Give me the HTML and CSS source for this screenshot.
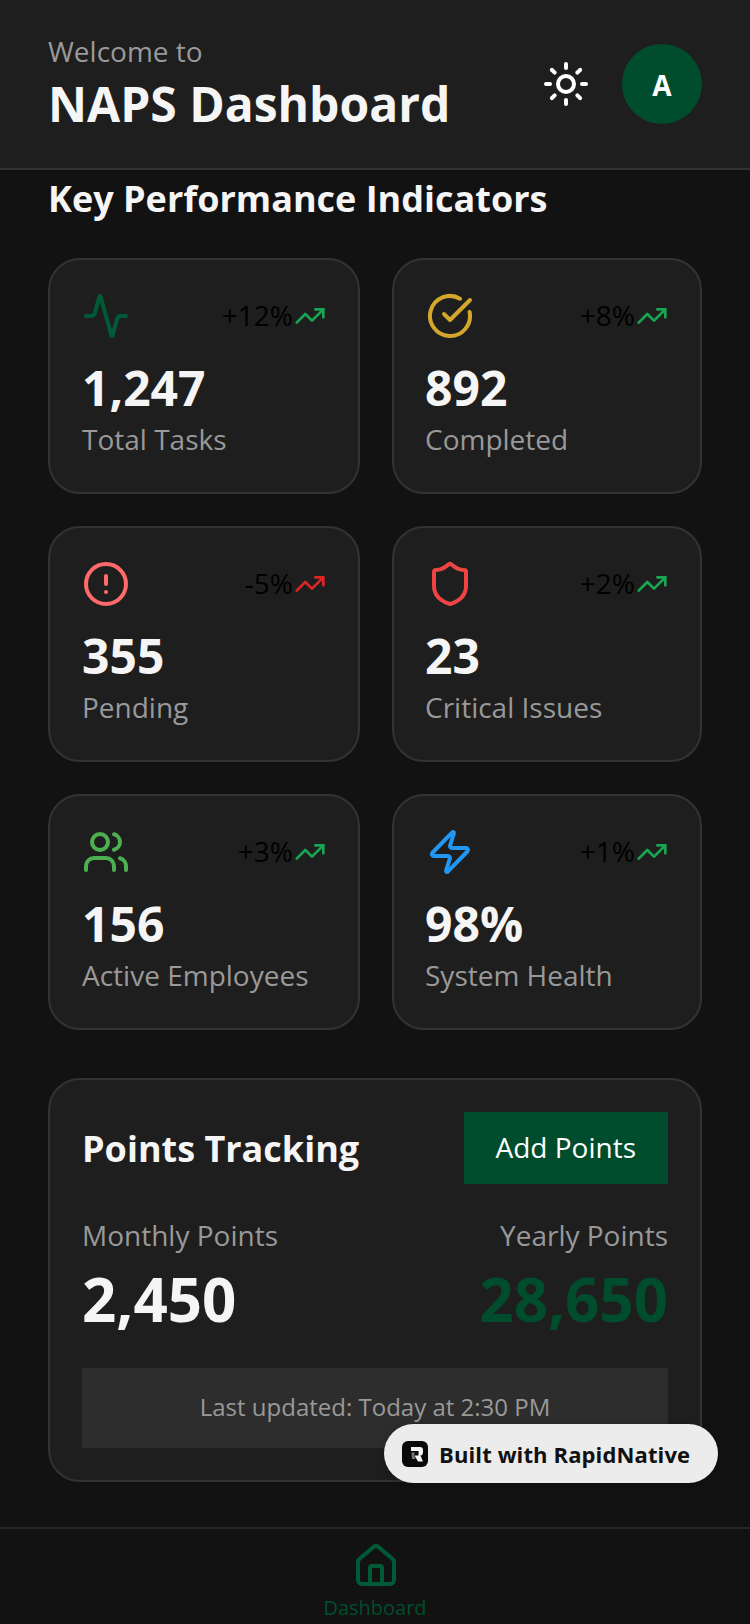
FILE: index.html
```html
<!DOCTYPE html>
<html lang="en">
<head>
<meta charset="utf-8">
<title>NAPS Dashboard</title>
<link rel="stylesheet" href="styles.css">
</head>
<body>
<div class="app">
  <header class="header">
    <div class="header-text">
      <div class="welcome">Welcome to</div>
      <h1 class="title">NAPS Dashboard</h1>
    </div>
    <div class="header-actions">
      <svg class="icon icon-sun" viewBox="0 0 24 24"><circle cx="12" cy="12" r="4"/><path d="M12 2v2"/><path d="M12 20v2"/><path d="m4.93 4.93 1.41 1.41"/><path d="m17.66 17.66 1.41 1.41"/><path d="M2 12h2"/><path d="M20 12h2"/><path d="m6.34 17.66-1.41 1.41"/><path d="m19.07 4.93-1.41 1.41"/></svg>
      <div class="avatar">A</div>
    </div>
  </header>
  <main class="main">
    <h2 class="section-title">Key Performance Indicators</h2>
    <div class="kpi-grid">
      <div class="card">
        <div class="card-top">
          <svg class="icon c-green" viewBox="0 0 24 24"><path d="M22 12h-2.48a2 2 0 0 0-1.93 1.46l-2.35 8.36a.25.25 0 0 1-.48 0L9.24 2.18a.25.25 0 0 0-.48 0l-2.35 8.36A2 2 0 0 1 4.49 12H2"/></svg>
          <div class="trend"><span class="trend-text">+12%</span><svg class="trend-icon up" viewBox="0 0 24 24"><path d="M16 7h6v6"/><path d="m22 7-8.5 8.5-5-5L2 17"/></svg></div>
        </div>
        <div class="value">1,247</div>
        <div class="label">Total Tasks</div>
      </div>
      <div class="card">
        <div class="card-top">
          <svg class="icon c-gold" viewBox="0 0 24 24"><path d="M21.801 10A10 10 0 1 1 17 3.335"/><path d="m9 11 3 3L22 4"/></svg>
          <div class="trend"><span class="trend-text">+8%</span><svg class="trend-icon up" viewBox="0 0 24 24"><path d="M16 7h6v6"/><path d="m22 7-8.5 8.5-5-5L2 17"/></svg></div>
        </div>
        <div class="value">892</div>
        <div class="label">Completed</div>
      </div>
      <div class="card">
        <div class="card-top">
          <svg class="icon c-coral" viewBox="0 0 24 24"><circle cx="12" cy="12" r="10"/><path d="M12 8v4"/><path d="M12 16h.01"/></svg>
          <div class="trend"><span class="trend-text">-5%</span><svg class="trend-icon down" viewBox="0 0 24 24"><path d="M16 7h6v6"/><path d="m22 7-8.5 8.5-5-5L2 17"/></svg></div>
        </div>
        <div class="value">355</div>
        <div class="label">Pending</div>
      </div>
      <div class="card">
        <div class="card-top">
          <svg class="icon c-red" viewBox="0 0 24 24"><path d="M20 13c0 5-3.5 7.5-7.66 8.95a1 1 0 0 1-.67-.01C7.5 20.5 4 18 4 13V6a1 1 0 0 1 1-1c2 0 4.5-1.2 6.24-2.72a1.17 1.17 0 0 1 1.52 0C14.51 3.81 17 5 19 5a1 1 0 0 1 1 1z"/></svg>
          <div class="trend"><span class="trend-text">+2%</span><svg class="trend-icon up" viewBox="0 0 24 24"><path d="M16 7h6v6"/><path d="m22 7-8.5 8.5-5-5L2 17"/></svg></div>
        </div>
        <div class="value">23</div>
        <div class="label">Critical Issues</div>
      </div>
      <div class="card">
        <div class="card-top">
          <svg class="icon c-lime" viewBox="0 0 24 24"><path d="M16 21v-2a4 4 0 0 0-4-4H6a4 4 0 0 0-4 4v2"/><path d="M16 3.128a4 4 0 0 1 0 7.744"/><path d="M22 21v-2a4 4 0 0 0-3-3.87"/><circle cx="9" cy="7" r="4"/></svg>
          <div class="trend"><span class="trend-text">+3%</span><svg class="trend-icon up" viewBox="0 0 24 24"><path d="M16 7h6v6"/><path d="m22 7-8.5 8.5-5-5L2 17"/></svg></div>
        </div>
        <div class="value">156</div>
        <div class="label">Active Employees</div>
      </div>
      <div class="card">
        <div class="card-top">
          <svg class="icon c-blue" viewBox="0 0 24 24"><path d="M4 14a1 1 0 0 1-.78-1.63l9.9-10.2a.5.5 0 0 1 .86.46l-1.92 6.02A1 1 0 0 0 13 10h7a1 1 0 0 1 .78 1.63l-9.9 10.2a.5.5 0 0 1-.86-.46l1.92-6.02A1 1 0 0 0 11 14z"/></svg>
          <div class="trend"><span class="trend-text">+1%</span><svg class="trend-icon up" viewBox="0 0 24 24"><path d="M16 7h6v6"/><path d="m22 7-8.5 8.5-5-5L2 17"/></svg></div>
        </div>
        <div class="value">98%</div>
        <div class="label">System Health</div>
      </div>
    </div>
    <section class="points">
      <div class="points-head">
        <h3 class="points-title">Points Tracking</h3>
        <div class="add-btn">Add Points</div>
      </div>
      <div class="points-row">
        <div>
          <div class="label">Monthly Points</div>
          <div class="points-value">2,450</div>
        </div>
        <div class="points-right">
          <div class="label">Yearly Points</div>
          <div class="points-value green">28,650</div>
        </div>
      </div>
      <div class="updated">Last updated: Today at 2:30 PM</div>
    </section>
  </main>
  <nav class="nav">
    <svg class="icon nav-icon c-green" viewBox="0 0 24 24"><path d="M15 21v-8a1 1 0 0 0-1-1h-4a1 1 0 0 0-1 1v8"/><path d="M3 10a2 2 0 0 1 .709-1.528l7-5.999a2 2 0 0 1 2.582 0l7 5.999A2 2 0 0 1 21 10v9a2 2 0 0 1-2 2H5a2 2 0 0 1-2-2z"/></svg>
    <div class="nav-label">Dashboard</div>
  </nav>
  <div class="badge">
    <svg class="badge-logo" viewBox="0 0 26 26"><rect width="26" height="26" rx="6" fill="#0a0a0a"/><path d="M9 6h9a3 3 0 0 1 3 3v2.500a3 3 0 0 1-2.500 3L21 20.500h-5L12.500 14.500h4V10H9z" fill="#f4f4f4"/><path d="M9.500 11.500h3.500l-1 2.500 1.500 4H10z" fill="#777"/></svg>
    <span>Built with RapidNative</span>
  </div>
</div>
</body>
</html>
```
FILE: styles.css
```css
* { box-sizing: border-box; }
html, body { margin: 0; padding: 0; background: #121212; }
body { font-family: "Open Sans", sans-serif; }
.app { position: relative; width: 750px; height: 1624px; padding-bottom: 9px; overflow: hidden; display: flex; flex-direction: column; background: #121212; }

.header { height: 170px; flex: none; display: flex; align-items: center; justify-content: space-between; padding: 0 48px; background: #1e1e1e; border-bottom: 2px solid #333; }
.welcome { font-size: 28px; line-height: 38px; color: #999; }
.title { margin: 1px 0 -1px; font-size: 48px; line-height: 66px; font-weight: 700; color: #f5f5f5; }
.header-actions { display: flex; align-items: center; gap: 32px; }
.avatar { width: 80px; height: 80px; padding-top: 2px; border-radius: 50%; background: #004d2e; color: #fff; display: flex; align-items: center; justify-content: center; font-size: 28px; font-weight: 700; }

.icon { width: 48px; height: 48px; flex: none; fill: none; stroke: currentColor; stroke-width: 2; stroke-linecap: round; stroke-linejoin: round; display: block; }
.icon-sun { color: #fff; }
.c-green { color: #005a38; }
.c-gold { color: #d4a72c; }
.c-coral { color: #ff6b6b; }
.c-red { color: #ef4444; }
.c-lime { color: #4caf50; }
.c-blue { color: #2196f3; }

.main { flex: 1; min-height: 0; padding: 4px 48px 0; overflow: hidden; }
.section-title { margin: 0 0 34px; font-size: 36px; line-height: 50px; font-weight: 700; color: #f5f5f5; }
.kpi-grid { display: grid; grid-template-columns: 312px 310px; gap: 32px; }
.card { height: 236px; padding: 32px; background: #1e1e1e; border: 2px solid #333; border-radius: 32px; }
.card:nth-child(even) { padding-left: 31px; }
.card:nth-child(even) .icon { margin-left: 1px; }
.card-top { display: flex; align-items: center; justify-content: space-between; height: 48px; margin-bottom: 16px; }
.trend { display: flex; align-items: center; font-size: 28px; line-height: 38px; color: #000; }
.trend-text { padding-bottom: 2px; margin-right: 1px; }
.trend-icon { width: 32px; height: 32px; fill: none; stroke-width: 2; stroke-linecap: round; stroke-linejoin: round; }
.up { stroke: #18a652; }
.down { stroke: #dc2626; }
.value { font-size: 48px; line-height: 64px; font-weight: 700; color: #f5f5f5; }
.label { font-size: 28px; line-height: 38px; color: #999; }

.points { margin-top: 48px; padding: 32px; background: #1e1e1e; border: 2px solid #333; border-radius: 32px; }
.points-head { display: flex; align-items: center; justify-content: space-between; margin-bottom: 32px; }
.points-title { margin: 0; padding-top: 2px; font-size: 36px; line-height: 50px; font-weight: 700; color: #f5f5f5; }
.add-btn { padding: 15px 32px 17px; font-size: 28px; line-height: 40px; color: #fff; background: #004d2e; }
.points-row { display: flex; justify-content: space-between; margin-bottom: 32px; }
.points-right { text-align: right; }
.points-value { padding-top: 8px; font-size: 60px; line-height: 74px; font-weight: 700; color: #f5f5f5; }
.points-value.green { color: #004d2e; }
.updated { height: 80px; padding-bottom: 4px; display: flex; align-items: center; justify-content: center; font-size: 24px; color: #999; background: #2d2d2d; }

.nav { flex: none; height: 88px; padding-top: 13px; overflow: hidden; display: flex; flex-direction: column; align-items: center; background: #121212; border-top: 2px solid #262626; }
.nav-icon { margin-left: 2px; }
.nav-label { font-size: 20px; line-height: 28px; color: #004d2e; margin-top: 4px; white-space: nowrap; }

.badge { position: absolute; left: 384px; top: 1424px; width: 334px; height: 59px; display: flex; align-items: center; gap: 11px; padding-left: 18px; border-radius: 30px; background: #ececec; box-shadow: 0 2px 8px rgba(0,0,0,.25); font-size: 22px; font-weight: 700; letter-spacing: .12px; color: #111; white-space: nowrap; }
.badge-logo { width: 26px; height: 26px; flex: none; }
```
